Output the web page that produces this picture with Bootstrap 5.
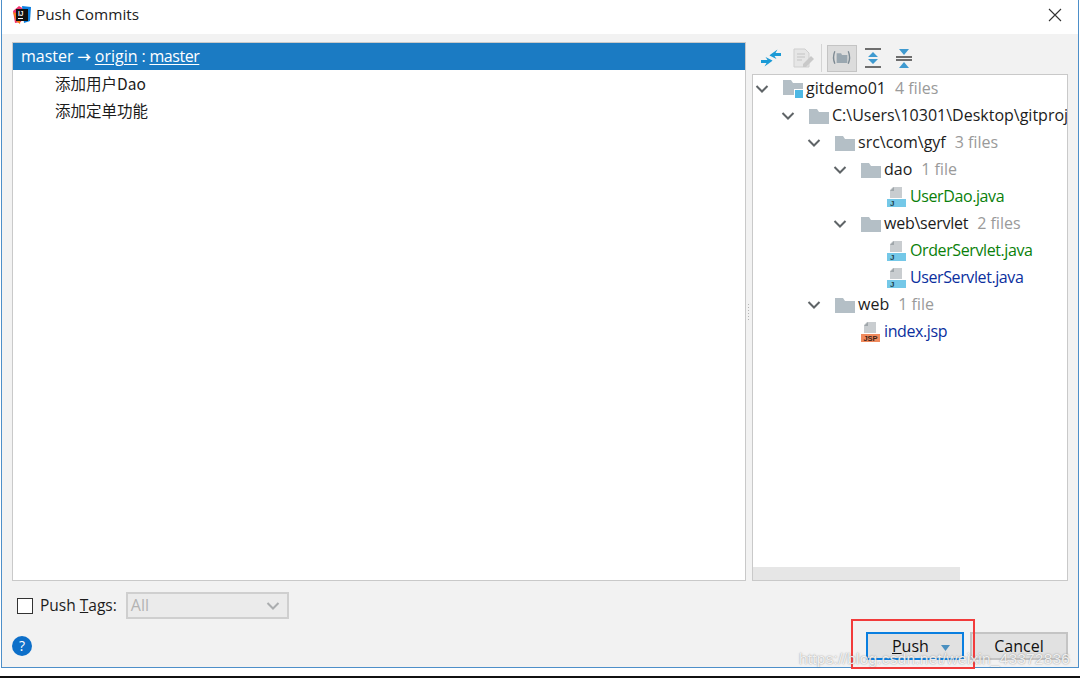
<!DOCTYPE html>
<html lang="en">
<head>
<meta charset="utf-8">
<title>Push Commits</title>
<link rel="stylesheet" href="https://cdn.jsdelivr.net/npm/bootstrap@5.3.0/dist/css/bootstrap.min.css">
<style>
html,body{margin:0;height:678px;overflow:hidden;background:#fff}
body{font-family:"Open Sans","Noto Sans CJK SC",sans-serif;font-size:16px;color:#1c1c1c;line-height:27px}
.shot{width:1080px;height:678px;position:relative;background:#fff}
.win{width:1078px;height:668px;margin-left:1px;border:1px solid #4d8fc9;border-top:0;background:#f2f2f2}
.tbar{height:34px;background:#fff;padding:0 12px 5px 10px}
.tbar-title{font-size:15.300px;margin-left:4px;color:#222}
.body-area{height:547px;padding:8px 10px 0 10px}
.commits{width:735px;background:#fff;border:1px solid #c9c9c9}
.sel-row{height:27px;background:#1b7bc3;color:#fff;padding-left:8px;word-spacing:-.3px}
.sel-row u{text-underline-offset:2px;text-decoration-thickness:1px}
.arw{font-size:13.500px;font-weight:600}
.m2{letter-spacing:-.45px}
.commit{height:27px;padding-left:42px;font-family:"Noto Sans CJK SC","Open Sans",sans-serif;font-size:15.500px}
.sash{width:6px}
.sash-dots{width:4px;height:18px;background-image:radial-gradient(#b5b5b5 .8px,transparent 1px);background-size:3px 3px}
.rside{width:316px}
.tools{height:32px;padding-left:4px;gap:1px}
.tool{width:30px;height:28px}
.tool-on{background:#dcdcdc;border:1px solid #c4c4c4;height:27px}
.vsep{width:1px;height:28px;background:#d4d4d4;margin:0 4px 0 3px}
.tree{height:507px;background:#fff;border:1px solid #c9c9c9;overflow:hidden;position:relative}
.trow{height:27px;white-space:nowrap}
.lvl0{padding-left:0}.lvl1{padding-left:26px}.lvl2{padding-left:52px}.lvl3{padding-left:78px}.lvl4{padding-left:134px}.lvl3f{padding-left:108px}
.chev{width:18px;flex:none}
.gap-ic{margin-right:3px;margin-left:12px;flex:none}
.gap-file{margin-right:3px;flex:none}
.cnt{color:#9a9a9a;margin-left:9px}
.fname{letter-spacing:-.4px}
.tight{letter-spacing:-.25px}
.c-green{color:#0a7f0a}.c-blue{color:#0b2f9e}
.hbar{position:absolute;left:0;right:0;bottom:0;height:13px;background:#fff}
.hthumb{width:207px;height:13px;background:#e6e6e6}
.foot{height:86px;padding:0 10px}
.tagline{height:27px;margin-top:11px;padding-left:5px;font-size:15.500px}
.cbx{width:16px;height:16px;border:1px solid #333;background:#fff;margin-right:7px}
.pick{width:163px;height:27px;margin-left:9px;background:#ebebeb;border:2px solid #cfcfcf;color:#b3b3b3;padding:0 7px 0 3px;font-size:16px}
.help{width:20px;height:20px;border-radius:50%;background:#0d6fc9;color:#fff;font-size:14px;line-height:20px;text-align:center}
.lastline{margin-top:13px;height:28px}
.dbtn{width:98px;height:28px;border:2px solid #c4c4c4;background:#e1e1e1;color:#111;font-size:16px;line-height:24px;text-align:center;padding:0}
.dbtn-main{border-color:#0a7fe0;margin-right:6px;padding-left:12px}
.redbox{position:absolute;left:851px;top:619px;width:124px;height:50px;border:2px solid #f23c3c;pointer-events:none}
.wmark{position:absolute;left:799px;top:645px;font-family:"Liberation Sans",sans-serif;font-size:15.400px;color:rgba(255,255,255,.85);text-shadow:0 0 1.500px rgba(110,110,110,.85);letter-spacing:.25px;white-space:nowrap}
.blackline{position:absolute;left:0;right:0;top:676px;height:2px;background:#111}
.closex{display:block}
</style>
</head>
<body>
<svg width="0" height="0" class="position-absolute">
  <defs>
    <symbol id="ichev" viewBox="0 0 14 10"><path d="M1.500 2l5.500 5.500L12.500 2" fill="none" stroke="#5f6467" stroke-width="2"/></symbol>
    <symbol id="ifold" viewBox="0 0 20 16"><path d="M0 1h8l2 3h10v12H0z" fill="#b4bfc6"/></symbol>
    <symbol id="ifile" viewBox="0 0 20 20"><path d="M6 0h9v11H3V3z" fill="#c9cdd0"/><path d="M3 4h4V0z" fill="#9fa6aa"/><rect x="0" y="12" width="19" height="8" fill="#74c8e8"/><text x="3" y="19" font-family="Liberation Sans,sans-serif" font-size="8" font-weight="700" fill="#24424f">J</text></symbol>
    <symbol id="ijsp" viewBox="0 0 20 20"><path d="M6 0h9v11H3V3z" fill="#c9cdd0"/><path d="M3 4h4V0z" fill="#9fa6aa"/><rect x="0" y="12" width="19" height="8" fill="#f08a5d"/><text x="9.500" y="19" text-anchor="middle" font-family="Liberation Sans,sans-serif" font-size="7.500" font-weight="700" fill="#3a2118">JSP</text></symbol>
  </defs>
</svg>
<div class="shot">
  <div class="win d-flex flex-column">
    <div class="tbar d-flex align-items-center">
      <svg width="20" height="20" viewBox="0 0 20 20"><path d="M1 6l6-5 5 3-3 13-6 1z" fill="#f0346e"/><path d="M1 7l3 9 4 3 1-9z" fill="#f97a12"/><path d="M10 1l9 1-1 14-6 2z" fill="#0b7fe0"/><rect x="4" y="4" width="12" height="12" fill="#111"/><text x="6" y="11" font-family="Liberation Sans,sans-serif" font-size="6.500" font-weight="700" fill="#fff">IJ</text><rect x="6" y="13" width="5" height="1" fill="#fff"/></svg>
      <span class="tbar-title">Push Commits</span>
      <svg class="closex ms-auto me-1" width="14" height="14" viewBox="0 0 14 14"><path d="M1 1l12 12M13 1L1 13" stroke="#333" stroke-width="1.100" fill="none"/></svg>
    </div>
    <div class="body-area d-flex">
      <div class="commits">
        <div class="sel-row">master <span class="arw">→</span> <u>origin</u> : <u class="m2">master</u></div>
        <div class="commit">添加用户Dao</div>
        <div class="commit">添加定单功能</div>
      </div>
      <div class="sash d-flex align-items-center justify-content-center"><div class="sash-dots"></div></div>
      <div class="rside d-flex flex-column">
        <div class="tools d-flex align-items-center">
          <svg class="tool" viewBox="0 0 28 28"><path d="M4 16h6.500l-2-3 7 3.500-1 1-7 5 2-3.500H4z" fill="#1a9ad6"/><path d="M24 12h-6.500l2 3-7-3.500 1-1 7-5-2 3.500H24z" fill="#1a9ad6"/></svg>
          <svg class="tool" viewBox="0 0 28 28"><path d="M6 5h11l4 4v14H6z" fill="#e6e6e6" stroke="#cfcfcf"/><path d="M9 10h8M9 13h8M9 16h5" stroke="#c4c4c4"/><path d="M15 20l8-8 3 3-8 8h-3z" fill="#c9c9c9"/></svg>
          <div class="vsep"></div>
          <svg class="tool tool-on" viewBox="0 0 28 28"><path d="M6 6q-3 7 0 14M21 6q3 7 0 14" fill="none" stroke="#7d8a93" stroke-width="1.500"/><path d="M8 8h5l1 2h6v9H8z" fill="#9aa7b0"/></svg>
          <svg class="tool" viewBox="0 0 28 28"><path d="M6 5h16M6 23h16" stroke="#6e6e6e" stroke-width="2"/><path d="M14 8l5 5H9zM14 20l-5-5h10z" fill="#3f9ad0"/></svg>
          <svg class="tool" viewBox="0 0 28 28"><path d="M6 13h16M6 16h16" stroke="#6e6e6e" stroke-width="2"/><path d="M14 11L9 5h10zM14 18l5 6H9z" fill="#3f9ad0"/></svg>
        </div>
        <div class="tree">
          <div class="trow lvl0 d-flex align-items-center"><svg class="chev" width="18" height="10"><use href="#ichev"/></svg><svg class="gap-ic" width="20" height="20" viewBox="0 0 20 20"><path d="M0 1h8l2 3h10v12H0z" fill="#b4bfc6"/><rect x="11" y="10" width="9" height="9" fill="#fff"/><rect x="12" y="11" width="8" height="8" fill="#4db8e4"/></svg><span>gitdemo01</span><span class="cnt">4 files</span></div>
          <div class="trow lvl1 d-flex align-items-center"><svg class="chev" width="18" height="10"><use href="#ichev"/></svg><svg class="gap-ic" width="20" height="16"><use href="#ifold"/></svg><span>C:\Users\10301\Desktop\gitproject</span></div>
          <div class="trow lvl2 d-flex align-items-center"><svg class="chev" width="18" height="10"><use href="#ichev"/></svg><svg class="gap-ic" width="20" height="16"><use href="#ifold"/></svg><span>src\com\gyf</span><span class="cnt">3 files</span></div>
          <div class="trow lvl3 d-flex align-items-center"><svg class="chev" width="18" height="10"><use href="#ichev"/></svg><svg class="gap-ic" width="20" height="16"><use href="#ifold"/></svg><span>dao</span><span class="cnt">1 file</span></div>
          <div class="trow lvl4 d-flex align-items-center"><svg class="gap-file" width="20" height="20"><use href="#ifile"/></svg><span class="c-green fname">UserDao.java</span></div>
          <div class="trow lvl3 d-flex align-items-center"><svg class="chev" width="18" height="10"><use href="#ichev"/></svg><svg class="gap-ic" width="20" height="16"><use href="#ifold"/></svg><span class="tight">web\servlet</span><span class="cnt">2 files</span></div>
          <div class="trow lvl4 d-flex align-items-center"><svg class="gap-file" width="20" height="20"><use href="#ifile"/></svg><span class="c-green fname">OrderServlet.java</span></div>
          <div class="trow lvl4 d-flex align-items-center"><svg class="gap-file" width="20" height="20"><use href="#ifile"/></svg><span class="c-blue fname">UserServlet.java</span></div>
          <div class="trow lvl2 d-flex align-items-center"><svg class="chev" width="18" height="10"><use href="#ichev"/></svg><svg class="gap-ic" width="20" height="16"><use href="#ifold"/></svg><span>web</span><span class="cnt">1 file</span></div>
          <div class="trow lvl3f d-flex align-items-center"><svg class="gap-file" width="20" height="20"><use href="#ijsp"/></svg><span class="c-blue fname">index.jsp</span></div>
          <div class="hbar"><div class="hthumb"></div></div>
        </div>
      </div>
    </div>
    <div class="foot">
      <div class="tagline d-flex align-items-center"><div class="cbx"></div><span>Push <u>T</u>ags:</span>
        <div class="pick d-flex align-items-center justify-content-between"><span>All</span><svg width="14" height="10"><use href="#ichev" opacity=".45"/></svg></div>
      </div>
      <div class="lastline d-flex align-items-center justify-content-between">
        <div class="help">?</div>
        <div class="d-flex">
          <button class="dbtn dbtn-main" type="button"><u>P</u>ush <svg class="ms-2" width="9" height="6" viewBox="0 0 9 6"><path d="M0 0h9L4.500 6z" fill="#4a90c0"/></svg></button>
          <button class="dbtn" type="button">Cancel</button>
        </div>
      </div>
    </div>
  </div>
  <div class="redbox"></div>
  <div class="wmark">https://blog.csdn.net/weixin_43372836</div>
  <div class="blackline"></div>
</div>
<script src="https://cdn.jsdelivr.net/npm/bootstrap@5.3.0/dist/js/bootstrap.bundle.min.js"></script>
</body>
</html>
